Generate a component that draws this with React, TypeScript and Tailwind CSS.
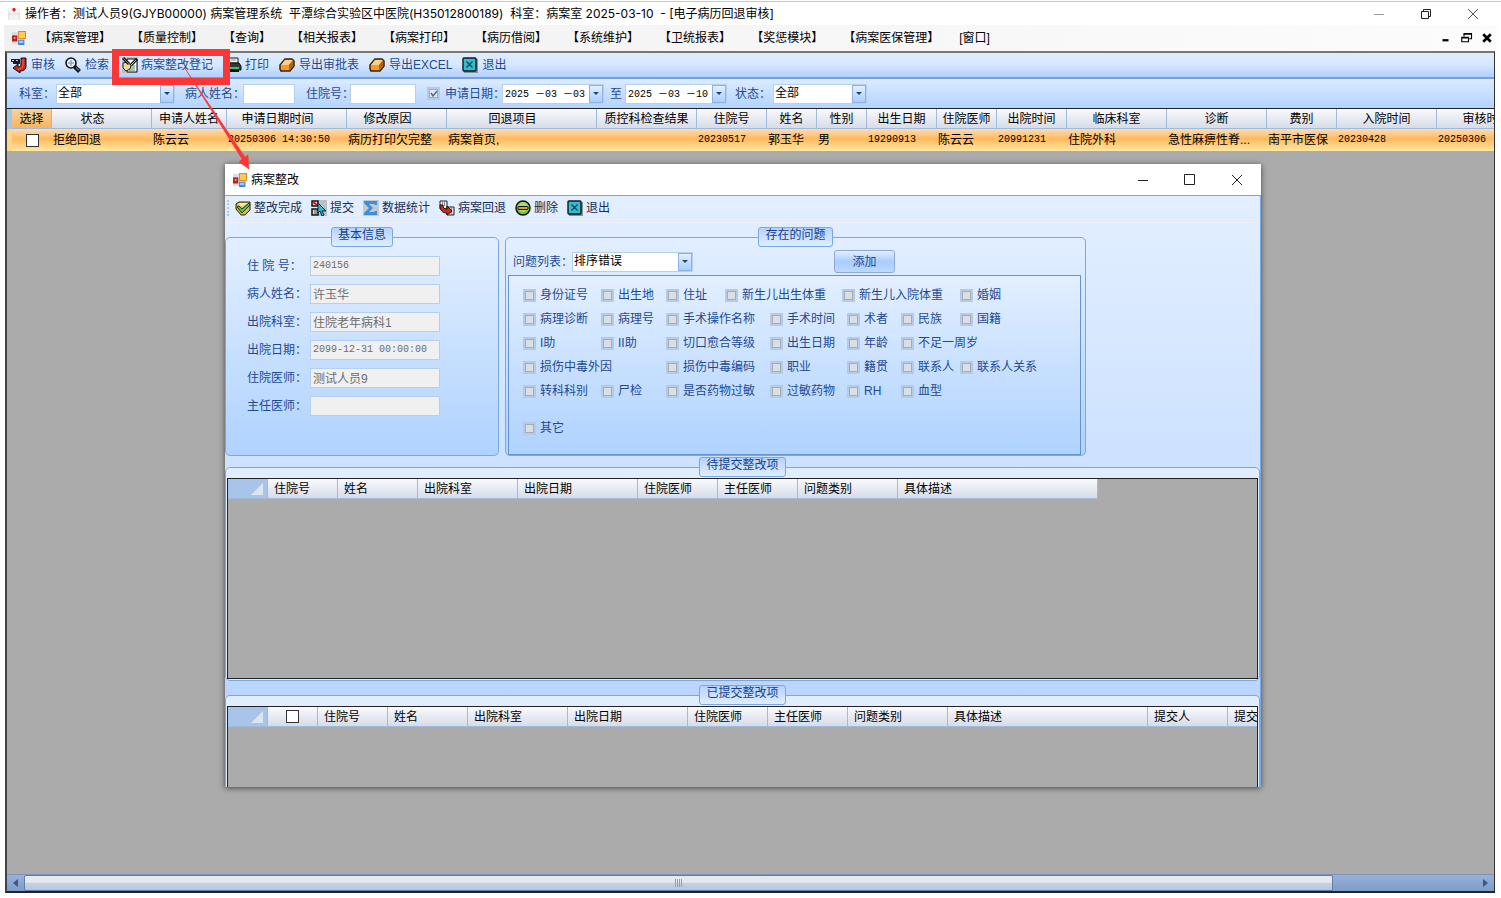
import type { ReactNode } from "react";
import clsx from "clsx";

const menus = [
  "【病案管理】",
  "【质量控制】",
  "【查询】",
  "【相关报表】",
  "【病案打印】",
  "【病历借阅】",
  "【系统维护】",
  "【卫统报表】",
  "【奖惩模块】",
  "【病案医保管理】",
  "[窗口]",
];

const columns = [
  { title: "状态", width: 100, value: "拒绝回退", sortable: true },
  { title: "申请人姓名", width: 75, value: "陈云云" },
  { title: "申请日期时间", width: 120, value: "20250306 14:30:50", mono: true, sortable: true },
  { title: "修改原因", width: 100, value: "病历打印欠完整", sortable: true },
  { title: "回退项目", width: 150, value: "病案首页,", sortable: true },
  { title: "质控科检查结果", width: 100, value: "" },
  { title: "住院号", width: 70, value: "20230517", mono: true },
  { title: "姓名", width: 50, value: "郭玉华" },
  { title: "性别", width: 50, value: "男" },
  { title: "出生日期", width: 70, value: "19290913", mono: true },
  { title: "住院医师", width: 60, value: "陈云云" },
  { title: "出院时间", width: 70, value: "20991231", mono: true },
  { title: "临床科室", width: 100, value: "住院外科" },
  { title: "诊断", width: 100, value: "急性麻痹性脊..." },
  { title: "费别", width: 70, value: "南平市医保" },
  { title: "入院时间", width: 100, value: "20230428", mono: true },
  { title: "审核时间", width: 100, value: "20250306", mono: true },
];

const patient = [
  { id: "zyh", label: "住 院 号：", value: "240156", mono: true },
  { id: "xm", label: "病人姓名：", value: "许玉华" },
  { id: "cyks", label: "出院科室：", value: "住院老年病科1" },
  { id: "cyrq", label: "出院日期：", value: "2099-12-31 00:00:00", mono: true },
  { id: "zyys", label: "住院医师：", value: "测试人员9" },
  { id: "zrys", label: "主任医师：", value: "" },
];

const problems = [
  { label: "身份证号", pos: "row-start-1 col-start-1" },
  { label: "出生地", pos: "row-start-1 col-start-2" },
  { label: "住址", pos: "row-start-1 col-start-3" },
  { label: "新生儿出生体重", pos: "row-start-1 col-start-4" },
  { label: "新生儿入院体重", pos: "row-start-1 col-start-6" },
  { label: "婚姻", pos: "row-start-1 col-start-9" },
  { label: "病理诊断", pos: "row-start-2 col-start-1" },
  { label: "病理号", pos: "row-start-2 col-start-2" },
  { label: "手术操作名称", pos: "row-start-2 col-start-3" },
  { label: "手术时间", pos: "row-start-2 col-start-5" },
  { label: "术者", pos: "row-start-2 col-start-7" },
  { label: "民族", pos: "row-start-2 col-start-8" },
  { label: "国籍", pos: "row-start-2 col-start-9" },
  { label: "I助", pos: "row-start-3 col-start-1" },
  { label: "II助", pos: "row-start-3 col-start-2" },
  { label: "切口愈合等级", pos: "row-start-3 col-start-3" },
  { label: "出生日期", pos: "row-start-3 col-start-5" },
  { label: "年龄", pos: "row-start-3 col-start-7" },
  { label: "不足一周岁", pos: "row-start-3 col-start-8" },
  { label: "损伤中毒外因", pos: "row-start-4 col-start-1" },
  { label: "损伤中毒编码", pos: "row-start-4 col-start-3" },
  { label: "职业", pos: "row-start-4 col-start-5" },
  { label: "籍贯", pos: "row-start-4 col-start-7" },
  { label: "联系人", pos: "row-start-4 col-start-8" },
  { label: "联系人关系", pos: "row-start-4 col-start-9" },
  { label: "转科科别", pos: "row-start-5 col-start-1" },
  { label: "尸检", pos: "row-start-5 col-start-2" },
  { label: "是否药物过敏", pos: "row-start-5 col-start-3" },
  { label: "过敏药物", pos: "row-start-5 col-start-5" },
  { label: "RH", pos: "row-start-5 col-start-7" },
  { label: "血型", pos: "row-start-5 col-start-8" },
  { label: "其它", pos: "row-start-7 col-start-1" },
];

const pendingColumns = [
  { title: "住院号", width: 70 },
  { title: "姓名", width: 80 },
  { title: "出院科室", width: 100 },
  { title: "出院日期", width: 120 },
  { title: "住院医师", width: 80 },
  { title: "主任医师", width: 80 },
  { title: "问题类别", width: 100 },
  { title: "具体描述", width: 200 },
];

const submittedColumns = [
  ...pendingColumns,
  { title: "提交人", width: 80 },
  { title: "提交时间", width: 100 },
];

/* ---------- icons ---------- */

function Svg({ children, size = "size-4" }: { children: ReactNode; size?: string }) {
  return (
    <svg viewBox="0 0 16 16" className={clsx(size, "shrink-0")} aria-hidden="true">
      {children}
    </svg>
  );
}

function FormIcon() {
  return (
    <Svg size="size-3.5">
      <rect x="0" y="1" width="15" height="14" fill="#d9dde3" />
      <rect x="0" y="5" width="6" height="7" fill="#b3261e" />
      <rect x="2" y="7" width="2" height="2" fill="#f4a58a" />
      <rect x="7" y="0" width="9" height="9" fill="#d98213" />
      <rect x="8" y="1" width="7" height="7" fill="#ffc95a" />
      <rect x="7" y="10" width="7" height="6" fill="#3f7fd6" />
      <rect x="8" y="11" width="5" height="3" fill="#9cc6ff" />
    </Svg>
  );
}

function AppIcon() {
  return (
    <Svg size="size-3.5">
      <path d="M1 1h14v14H1z" fill="#f3f3f3" />
      <path d="M2 15V5M14 15V5M2 8h12" stroke="#dcdcdc" />
      <path d="M8 1v4M6 3h4" stroke="#d8232a" strokeWidth="2" />
    </Svg>
  );
}

function AuditIcon() {
  return (
    <Svg>
      <path d="M0 2h9v5H2V5H0z" fill="#1c1c1c" />
      <path d="M1 3h2v1H1zM5 3h2v1H5z" fill="#c9c9c9" />
      <path d="M10 1h5v8c0 4-3 5-6 5v2L2 11l5-4v3c2 0 3-1 3-3z" fill="#c8231c" stroke="#111" />
      <path d="M12 2v6c0 3-2 4-5 4" stroke="#f0685e" fill="none" />
    </Svg>
  );
}

function SearchIcon() {
  return (
    <Svg>
      <path d="M9 9l5.500 5.500" stroke="#111" strokeWidth="4" />
      <path d="M11 10.500l3 3" stroke="#4a6fae" strokeWidth="1.500" />
      <circle cx="6" cy="6" r="5" fill="#e6f0fb" stroke="#111" strokeWidth="1.600" />
      <path d="M6 3v6M3 6h6" stroke="#8ea5c4" strokeWidth="1.500" />
    </Svg>
  );
}

function RegisterIcon() {
  return (
    <Svg>
      <path d="M0 0h16v16H0z" fill="#b9bfc4" />
      <path d="M5 2h10v13H5z" fill="#f4f7f4" stroke="#111" />
      <path d="M9 9h4M8 11h5M7 13h6" stroke="#4a8f86" />
      <path d="M1 6l4-1 4 3-1 4-4 2-3-3z" fill="#f0dc9a" stroke="#222" />
      <path d="M1 1l6 6" stroke="#111" strokeWidth="3" />
      <path d="M1 1l6 6" stroke="#2fa892" />
      <path d="M15 2L9 8" stroke="#111" strokeWidth="3" />
      <path d="M14 3L9 8" stroke="#e8c23a" />
    </Svg>
  );
}

function PrintIcon() {
  return (
    <Svg>
      <path d="M3 1h9v5H3z" fill="#fff" stroke="#111" />
      <path d="M5 3h5" stroke="#888" />
      <path d="M1 6h12l2 3v4H1z" fill="#2f3b36" stroke="#111" />
      <path d="M2 11h11" stroke="#48c060" strokeWidth="2" />
      <path d="M3 14h10" stroke="#111" strokeWidth="2" />
    </Svg>
  );
}

function ExportIcon() {
  return (
    <Svg>
      <path d="M6 2h7l2 2v5l-4 5H2l-1-2V8z" fill="#f39a2b" stroke="#3b2208" strokeWidth="1.500" />
      <path d="M6 3h8l-4 5H2z" fill="#ffcf86" />
      <path d="M10 8l4-5v6l-4 4z" fill="#b3620f" />
    </Svg>
  );
}

function ExitIcon() {
  return (
    <Svg>
      <rect x="2" y="2" width="14" height="14" fill="#8a8f94" />
      <rect x="1" y="1" width="13" height="13" rx="1" fill="#35bccb" stroke="#101820" strokeWidth="1.400" />
      <path d="M4.500 4.500l6 6M10.500 4.500l-6 6" stroke="#0e3f58" strokeWidth="1.200" />
    </Svg>
  );
}

function DoneIcon() {
  return (
    <Svg>
      <path d="M1 4l3-2h11v8l-5 5H6l-5-6z" fill="#d9b94c" stroke="#26200c" />
      <path d="M3 4l2-1h8L7 7z" fill="#f4e7a8" />
      <path d="M2 7l2-1 3 3 7-6 1 2-8 8z" fill="#5fc04a" stroke="#173d12" />
    </Svg>
  );
}

function SubmitIcon() {
  return (
    <Svg>
      <path d="M8 0h8v16H8z" fill="#b9bfc4" />
      <path d="M1 1h6v5H1zM1 9h6v6H1z" fill="#ddd" stroke="#111" strokeWidth="1.500" />
      <path d="M2 2l4 3" stroke="#c8231c" strokeWidth="2" />
      <path d="M3 11h3M3 13h3" stroke="#555" />
      <path d="M7 3l8 8h-4l2 4-2 1-2-5-2 2z" fill="#37b4cf" stroke="#0d2c3b" />
    </Svg>
  );
}

function SigmaIcon() {
  return (
    <Svg>
      <path d="M0 0h16v16H0z" fill="#c3c9d1" />
      <path d="M1 1h13v4h-2l-1-1H6l4 4-4 4h5l1-1h2v4H1v-2l5-5-5-5z" fill="#3f8fd8" />
    </Svg>
  );
}

function RollbackIcon() {
  return (
    <Svg>
      <path d="M8 7h7v8H8z" fill="#ddd" stroke="#222" />
      <path d="M1 1h7v8H1z" fill="#eee" stroke="#222" />
      <path d="M3 3h1M5 3h1M3 5h1M5 5h1M12 9h1M12 13h1" stroke="#333" />
      <path d="M1 5h3c0 3 1 4 4 4V6l5 5-5 4v-2c-5 0-7-3-7-8z" fill="#c8301c" stroke="#2a0a06" />
    </Svg>
  );
}

function DeleteIcon() {
  return (
    <Svg>
      <circle cx="8" cy="8" r="7" fill="#7cc242" stroke="#111" strokeWidth="1.500" />
      <circle cx="8" cy="7" r="5" fill="#a5dd70" />
      <rect x="3" y="6.500" width="10" height="3" rx="1" fill="#e0a12c" stroke="#111" />
    </Svg>
  );
}

/* ---------- shared controls ---------- */

function DropArrow() {
  return (
    <span className="pointer-events-none absolute inset-y-px right-px flex w-3.5 items-center justify-center border border-[#8db2e3] bg-linear-to-b from-[#e3efff] to-[#a9cdff]">
      <svg viewBox="0 0 6 3" className="h-[3px] w-1.5" aria-hidden="true">
        <path d="M0 0h6L3 3z" fill="#15428b" />
      </svg>
    </span>
  );
}

function Select({ id, value, className }: { id: string; value: string; className?: string }) {
  return (
    <span className={clsx("relative block h-5 text-black", className)}>
      <select
        id={id}
        className="block h-5 w-full appearance-none border border-[#b5cfee] bg-white pb-0.5 pl-px text-xs leading-4 outline-none"
      >
        <option>{value}</option>
      </select>
      <DropArrow />
    </span>
  );
}

function DateBox({ label, value }: { label: string; value: string }) {
  return (
    <span className="relative block h-5 w-[102px] text-black">
      <input
        aria-label={label}
        defaultValue={value}
        className="block h-5 w-full border border-[#b5cfee] bg-white pr-3.5 pb-0.5 pl-0.5 font-['Liberation_Mono','Noto_Sans_CJK_SC',monospace] text-[10px] outline-none"
      />
      <DropArrow />
    </span>
  );
}

function Tool({ icon, label, className }: { icon: ReactNode; label: string; className?: string }) {
  return (
    <button type="button" className={clsx("flex items-center whitespace-nowrap", className)}>
      {icon}
      {label}
    </button>
  );
}

function Group({
  title,
  className,
  children,
}: {
  title: string;
  className?: string;
  children: ReactNode;
}) {
  return (
    <fieldset className={clsx("min-w-0 border border-[#7aa7e0]", className)}>
      <legend className="mx-auto flex h-5 items-start rounded-[3px] border border-[#7aa7e0] bg-linear-to-b from-[#b5d3ff] to-[#e0edff] px-1.5 leading-[14px] text-[#15428b]">
        {title}
      </legend>
      {children}
    </fieldset>
  );
}

function GridHead({ cols, selectable }: { cols: { title: string; width: number }[]; selectable?: boolean }) {
  const th = "h-5 border-r border-b border-[#9ebbdc] p-0 text-left font-normal whitespace-nowrap";
  return (
    <table className="w-0 table-fixed border-separate border-spacing-0 text-black">
      <colgroup>
        <col style={{ width: 40 }} />
        {selectable && <col style={{ width: 50 }} />}
        {cols.map((c) => (
          <col key={c.title} style={{ width: c.width }} />
        ))}
      </colgroup>
      <thead>
        <tr className="bg-linear-to-b from-[#f9fafc] to-[#d5dae7]">
          <th className={clsx(th, "bg-[#a9c4e9]")} aria-label="行">
            <svg viewBox="0 0 12 12" className="mr-1 ml-auto size-3" aria-hidden="true">
              <path d="M12 0v12H0z" fill="#dfe5ef" />
            </svg>
          </th>
          {selectable && (
            <th className={th}>
              <input
                type="checkbox"
                aria-label="全选"
                className="mx-auto block size-[13px] appearance-none border border-[#333] bg-white"
              />
            </th>
          )}
          {cols.map((c) => (
            <th key={c.title} className={clsx(th, "pl-1.5")}>
              {c.title}
            </th>
          ))}
        </tr>
      </thead>
    </table>
  );
}

/* ---------- dialog ---------- */

function RectifyDialog() {
  return (
    <section
      role="dialog"
      aria-label="病案整改"
      className="absolute top-[55px] right-[233px] bottom-[104px] left-[218px] flex flex-col overflow-hidden bg-white shadow-[0_1px_6px_rgba(0,0,0,0.6)]"
    >
      <header className="flex h-[31px] shrink-0 items-center pr-4 pl-2 text-black">
        <FormIcon />
        <h2 className="ml-1 flex-1">病案整改</h2>
        <div className="flex items-center gap-[31px] text-[#222]">
          <button type="button" aria-label="最小化">
            <Svg>
              <path d="M3 8.500h10" stroke="currentColor" />
            </Svg>
          </button>
          <button type="button" aria-label="最大化">
            <Svg>
              <path d="M2.500 2.500h10v10h-10z" fill="none" stroke="currentColor" />
            </Svg>
          </button>
          <button type="button" aria-label="关闭">
            <Svg>
              <path d="M3 3l10 10M13 3L3 13" stroke="currentColor" />
            </Svg>
          </button>
        </div>
      </header>

      <div className="flex min-h-0 flex-1 flex-col border-t border-r border-[#7aa7e0] bg-linear-to-b from-[#e3efff] to-[#b2d1ff]">
        <div className="flex h-[27px] shrink-0 items-center border-b border-[#eef0f6] pr-2 pb-0.5 pl-0.5 text-[#1a2c50]">
          <span className="mr-1.5 h-4 border-l-2 border-dotted border-[#b9c6dc]" />
          <div className="flex gap-[9px]">
            <Tool icon={<DoneIcon />} label="整改完成" className="gap-[3px]" />
            <Tool icon={<SubmitIcon />} label="提交" className="gap-[3px]" />
            <Tool icon={<SigmaIcon />} label="数据统计" className="gap-[3px]" />
            <Tool icon={<RollbackIcon />} label="病案回退" className="gap-[3px]" />
            <Tool icon={<DeleteIcon />} label="删除" className="gap-[3px]" />
            <Tool icon={<ExitIcon />} label="退出" className="gap-[3px]" />
          </div>
        </div>

        <div className="flex shrink-0 items-stretch gap-1.5 pt-1">
          <Group
            title="基本信息"
            className="h-[229px] w-[274px] rounded-[5px] bg-linear-to-b from-[#e3efff] to-[#afd2ff]"
          >
            <div className="flex flex-col gap-2 pt-[9px] pl-[21px]">
              {patient.map((p) => (
                <div key={p.id} className="flex h-5 items-center">
                  <label htmlFor={p.id} className="w-[63px] whitespace-nowrap">
                    {p.label}
                  </label>
                  <input
                    id={p.id}
                    defaultValue={p.value}
                    readOnly
                    className={clsx(
                      "h-5 w-[130px] border border-[#b5cfee] bg-[#f0f0f0] px-0.5 pb-0.5 text-[#6d6d6d] outline-none",
                      p.mono && "font-['Liberation_Mono'] text-[10px]"
                    )}
                  />
                </div>
              ))}
            </div>
          </Group>

          <Group
            title="存在的问题"
            className="h-[229px] w-[581px] rounded-[5px] bg-linear-to-b from-[#e3efff] to-[#afd2ff]"
          >
            <div className="flex h-[27px] items-center pt-0.5 pl-[7px]">
              <label htmlFor="problem-type" className="w-[59px] whitespace-nowrap">
                问题列表：
              </label>
              <Select id="problem-type" value="排序错误" className="w-[121px]" />
              <button
                type="button"
                className="ml-[141px] h-[23px] w-[61px] rounded-[3px] border border-[#8aa9d6] bg-linear-to-b from-[#e3efff] via-[#a9cdff] to-[#bcdaff]"
              >
                添加
              </button>
            </div>
            <div className="mt-px mr-1 ml-0.5 grid h-[180px] grid-cols-[78px_65px_59px_45px_72px_5px_54px_59px_1fr] grid-rows-[24px_24px_24px_24px_24px_13px_24px] border border-[#6593cf] bg-linear-to-b from-[#e3efff] to-[#afd2ff] pt-[7px] pl-[14px]">
              {problems.map((p) => (
                <label key={p.label} className={clsx("flex items-center gap-1 whitespace-nowrap", p.pos)}>
                  <input
                    type="checkbox"
                    className="size-[13px] shrink-0 appearance-none border-2 border-[#b3cae8] bg-[#dcdfe2] shadow-[inset_0_0_0_1px_#a8adb5]"
                  />
                  {p.label}
                </label>
              ))}
            </div>
          </Group>
        </div>

        <Group title="待提交整改项" className="mt-px h-56 shrink-0 rounded-[5px] bg-[#e0edff]">
          <div className="mx-px mt-px h-[201px] overflow-hidden border border-[#222] bg-[#ababab]">
            <GridHead cols={pendingColumns} />
          </div>
        </Group>

        <Group
          title="已提交整改项"
          className="mt-1 flex min-h-0 flex-1 flex-col rounded-t-[5px] border-b-0 bg-[#e0edff]"
        >
          <div className="mx-px mt-px h-full overflow-hidden border border-b-0 border-[#222] bg-[#ababab]">
            <GridHead cols={submittedColumns} selectable />
          </div>
        </Group>
      </div>
    </section>
  );
}

/* ---------- main window ---------- */

function RequestTable() {
  const th = "h-5 overflow-hidden border-r border-b border-[#9ebbdc] p-0 text-center font-normal whitespace-nowrap";
  const td = "h-[22px] overflow-hidden p-0 pl-px whitespace-nowrap";
  return (
    <table className="w-0 table-fixed border-separate border-spacing-0 text-black">
      <colgroup>
        <col style={{ width: 5 }} />
        <col style={{ width: 40 }} />
        {columns.map((c) => (
          <col key={c.title} style={{ width: c.width }} />
        ))}
      </colgroup>
      <thead>
        <tr className="bg-linear-to-b from-[#f9fafc] to-[#d5dae7]">
          <th className="bg-[#a9c4e9] p-0" aria-label="行" />
          <th className={clsx(th, "bg-linear-to-b from-[#f9d29b] to-[#f5b560]")}>选择</th>
          {columns.map((c) => (
            <th key={c.title} className={clsx(th, c.sortable && "pr-[18px]")}>
              {c.title}
            </th>
          ))}
        </tr>
      </thead>
      <tbody>
        <tr className="bg-linear-to-b from-[#fcdcb4] via-[#ffb95c] via-45% to-[#ffe9a4]">
          <td className="bg-[#ffd58d] p-0" />
          <td className={td}>
            <input
              type="checkbox"
              aria-label="选择该行"
              className="mx-auto block size-[13px] appearance-none border border-[#333] bg-white"
            />
          </td>
          {columns.map((c) => (
            <td key={c.title} className={clsx(td, c.mono && "font-['Liberation_Mono'] text-[10px]")}>
              {c.value}
            </td>
          ))}
        </tr>
      </tbody>
    </table>
  );
}

export default function App() {
  return (
    <div className="relative flex h-screen min-h-[700px] flex-col overflow-hidden bg-white pb-[5px] font-['Liberation_Sans','Noto_Sans_CJK_SC',sans-serif] text-xs leading-4 text-[#1e4a94]">
      <header className="mt-px flex h-6 shrink-0 items-center border-t border-[#c8c8c8] pr-5 pl-[7px] text-black">
        <AppIcon />
        <h1 className="ml-1 flex-1 font-['Inter','Noto_Sans_CJK_SC',sans-serif] whitespace-pre">
          操作者：测试人员9(GJYB00000) 病案管理系统&nbsp; 平潭综合实验区中医院(H35012800189)&nbsp; 科室：病案室 2025-03-10&nbsp; - [电子病历回退审核]
        </h1>
        <div className="flex items-center gap-[31px] text-[#222]">
          <button type="button" aria-label="最小化">
            <Svg>
              <path d="M3 8.500h10" stroke="#999" />
            </Svg>
          </button>
          <button type="button" aria-label="还原">
            <Svg>
              <path d="M3.500 5.500h7v7h-7zM5.500 5V3.500h7v7H11" fill="none" stroke="currentColor" />
            </Svg>
          </button>
          <button type="button" aria-label="关闭">
            <Svg>
              <path d="M3 3l10 10M13 3L3 13" stroke="#555" />
            </Svg>
          </button>
        </div>
      </header>

      <nav className="mr-1 ml-1 flex h-[26px] shrink-0 items-center bg-linear-to-r from-[#f0f0f0] to-[#fcfcfc] pr-1 pl-2 text-black">
        <FormIcon />
        <div className="ml-[13px] flex flex-1 gap-5 whitespace-nowrap">
          {menus.map((m) => (
            <a key={m} href="#">
              {m}
            </a>
          ))}
        </div>
        <div className="flex items-center gap-2">
          <button type="button" aria-label="最小化子窗口">
            <Svg size="size-3">
              <path d="M2 9.500h8v3H2z" />
            </Svg>
          </button>
          <button type="button" aria-label="还原子窗口">
            <Svg size="size-3">
              <path d="M1 7h9v6H1zM1 8h9M4 6V2h10v7h-3M4 3h10" fill="none" stroke="#000" strokeWidth="1.500" />
            </Svg>
          </button>
          <button type="button" aria-label="关闭子窗口">
            <Svg size="size-3">
              <path d="M3 3l10 10M13 3L3 13" stroke="#000" strokeWidth="3.500" />
            </Svg>
          </button>
        </div>
      </nav>

      <main className="mr-1.5 ml-[5px] flex min-h-0 flex-1 flex-col border-2 border-r border-t-[#777] border-r-[#333] border-b-[#222] border-l-[#444]">
        <div className="flex h-[26px] shrink-0 items-center gap-2.5 border-b-2 border-[#74a0dc] bg-linear-to-b from-[#e0ecff] via-[#d6e7ff] to-[#b0d0fc] pl-1">
          <Tool icon={<AuditIcon />} label="审核" className="gap-1" />
          <Tool icon={<SearchIcon />} label="检索" className="gap-1" />
          <Tool icon={<RegisterIcon />} label="病案整改登记" className="mx-[3px] gap-[3px]" />
          <Tool icon={<PrintIcon />} label="打印" className="gap-[3px]" />
          <Tool icon={<ExportIcon />} label="导出审批表" className="gap-1" />
          <Tool icon={<ExportIcon />} label="导出EXCEL" className="gap-1" />
          <Tool icon={<ExitIcon />} label="退出" className="gap-1" />
        </div>

        <div className="flex h-[30px] shrink-0 items-center border-b border-[#222] bg-linear-to-b from-[#dcebff] to-[#b3d3ff] pl-3 whitespace-nowrap">
          <label htmlFor="dept" className="w-[37px]">科室：</label>
          <Select id="dept" value="全部" className="w-[119px]" />
          <label htmlFor="patient" className="ml-2.5 w-[58px]">病人姓名：</label>
          <input id="patient" className="h-5 w-[52px] border border-[#b5cfee] bg-white outline-none" />
          <label htmlFor="inpatient" className="ml-[11px] w-11">住院号：</label>
          <input id="inpatient" className="h-5 w-[66px] border border-[#b5cfee] bg-white outline-none" />
          <label className="ml-[11px] flex w-[75px] items-center gap-[5px]">
            <span className="relative flex size-[13px] shrink-0">
              <input
                type="checkbox"
                defaultChecked
                className="size-[13px] appearance-none border-2 border-[#b3cae8] bg-[#e6e8ea] shadow-[inset_0_0_0_1px_#a8adb5]"
              />
              <svg viewBox="0 0 13 13" className="pointer-events-none absolute inset-0" aria-hidden="true">
                <path d="M4 6l2 3 4-5" fill="none" stroke="#4a6a9a" strokeWidth="1.500" />
              </svg>
            </span>
            申请日期：
          </label>
          <DateBox label="开始日期" value="2025 －03 －03" />
          <span className="mr-[3px] ml-1.5">至</span>
          <DateBox label="结束日期" value="2025 －03 －10" />
          <label htmlFor="state" className="ml-2 w-[38px]">状态：</label>
          <Select id="state" value="全部" className="w-[94px]" />
        </div>

        <div className="relative flex min-h-0 flex-1 flex-col overflow-hidden bg-[#ababab]">
          <RequestTable />
          <RectifyDialog />
          <div className="mt-auto flex h-[17px] shrink-0 items-stretch border-t border-[#7f93b8] bg-linear-to-b from-[#97b1db] to-[#7c9cc8]">
            <button type="button" aria-label="向左滚动" className="flex w-[17px] items-center justify-center">
              <svg viewBox="0 0 5 8" className="h-2 w-[5px]" aria-hidden="true">
                <path d="M5 0v8L0 4z" fill="#40587e" />
              </svg>
            </button>
            <div className="flex w-[88%] items-center justify-center gap-px rounded-xs border border-[#647cab] bg-linear-to-b from-[#e4e9ee] from-45% via-[#c7d3e2] via-50% to-[#b4c5dc]">
              <span className="h-2 border-l border-[#95a0b0]" />
              <span className="h-2 border-l border-[#95a0b0]" />
              <span className="h-2 border-l border-[#95a0b0]" />
              <span className="h-2 border-l border-[#95a0b0]" />
            </div>
            <button type="button" aria-label="向右滚动" className="ml-auto flex w-[17px] items-center justify-center">
              <svg viewBox="0 0 5 8" className="h-2 w-[5px]" aria-hidden="true">
                <path d="M0 0v8l5-4z" fill="#40587e" />
              </svg>
            </button>
          </div>
        </div>
      </main>

      {/* callout from the toolbar entry to the dialog it opens */}
      <div className="pointer-events-none absolute top-[49px] left-[112px] h-9 w-[118px] border-[7px] border-[#fb3636]" />
      <svg viewBox="0 0 66 104" className="pointer-events-none absolute top-[67px] left-[184px] h-[104px] w-[66px]" aria-hidden="true">
        <path d="M0 0L58 92L55 95L65 102L64 88L61 90Z" fill="#fb3636" stroke="#fb3636" strokeWidth="0.500" />
      </svg>
    </div>
  );
}
